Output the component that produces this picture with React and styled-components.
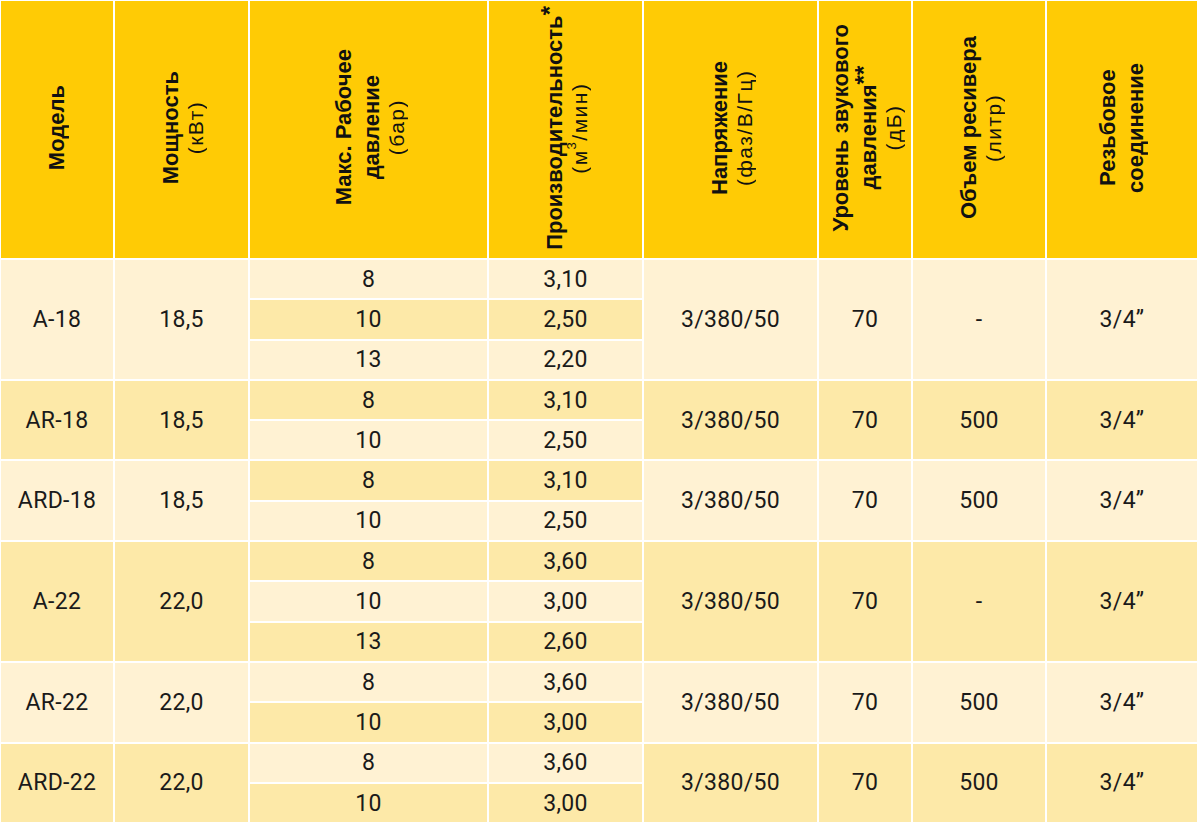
import React from 'react';
import styled, { createGlobalStyle } from 'styled-components';

const GlobalStyle = createGlobalStyle`
  html, body {
    margin: 0;
    padding: 0;
    background: #fff;
    overflow: hidden;
  }
`;

const COLORS = {
  header: '#ffcb05',
  light: '#fff2d3',
  dark: '#fde9a8',
};

const columns = [112, 133, 237, 153, 173, 92, 132, 150];

const headers = [
  { lines: ['Модель'] },
  { lines: ['Мощность'], unit: '(кВт)' },
  { lines: ['Макс. Рабочее', 'давление'], unit: '(бар)' },
  { lines: ['Производительность'], star: '*', unit: <>(м<sup>3</sup>/мин)</> },
  { lines: ['Напряжение'], unit: '(фаз/В/Гц)' },
  { lines: ['Уровень звукового', 'давления'], star: '**', unit: '(дБ)' },
  { lines: ['Объем ресивера'], unit: '(литр)' },
  { lines: ['Резьбовое', 'соединение'] },
];

const groups = [
  {
    model: 'A-18', power: '18,5', shade: 'light', receiver: '-',
    rows: [['8', '3,10', 'light'], ['10', '2,50', 'dark'], ['13', '2,20', 'light']],
  },
  {
    model: 'AR-18', power: '18,5', shade: 'dark', receiver: '500',
    rows: [['8', '3,10', 'dark'], ['10', '2,50', 'light']],
  },
  {
    model: 'ARD-18', power: '18,5', shade: 'light', receiver: '500',
    rows: [['8', '3,10', 'dark'], ['10', '2,50', 'light']],
  },
  {
    model: 'A-22', power: '22,0', shade: 'dark', receiver: '-',
    rows: [['8', '3,60', 'dark'], ['10', '3,00', 'light'], ['13', '2,60', 'dark']],
  },
  {
    model: 'AR-22', power: '22,0', shade: 'light', receiver: '500',
    rows: [['8', '3,60', 'light'], ['10', '3,00', 'dark']],
  },
  {
    model: 'ARD-22', power: '22,0', shade: 'dark', receiver: '500',
    rows: [['8', '3,60', 'light'], ['10', '3,00', 'dark']],
  },
];

const App = () => (
  <>
    <GlobalStyle />
    <Table>
      <colgroup>
        {columns.map((w, i) => (
          <col key={i} style={{ width: w }} />
        ))}
      </colgroup>
      <thead>
        <tr>
          {headers.map((h, i) => (
            <HeadCell key={i}>
              <Rotated>
                {h.lines.map((line, j) => (
                  <Title key={j}>
                    {line}
                    {j === h.lines.length - 1 && h.star && <Star>{h.star}</Star>}
                  </Title>
                ))}
                {h.unit && <Unit>{h.unit}</Unit>}
              </Rotated>
            </HeadCell>
          ))}
        </tr>
      </thead>
      <tbody>
        {groups.map((g) =>
          g.rows.map(([pressure, flow, shade], i) => (
            <Row key={g.model + i}>
              {i === 0 && (
                <>
                  <Cell shade={g.shade} rowSpan={g.rows.length}>{g.model}</Cell>
                  <Cell shade={g.shade} rowSpan={g.rows.length}>{g.power}</Cell>
                </>
              )}
              <Cell shade={shade}>{pressure}</Cell>
              <Cell shade={shade}>{flow}</Cell>
              {i === 0 && (
                <>
                  <Cell shade={g.shade} rowSpan={g.rows.length}>3/380/50</Cell>
                  <Cell shade={g.shade} rowSpan={g.rows.length}>70</Cell>
                  <Cell shade={g.shade} rowSpan={g.rows.length}>{g.receiver}</Cell>
                  <Cell shade={g.shade} rowSpan={g.rows.length}>3/4”</Cell>
                </>
              )}
            </Row>
          ))
        )}
      </tbody>
    </Table>
  </>
);

export default App;

const Table = styled.table`
  table-layout: fixed;
  width: 1200px;
  margin: -1px 0 0 -1px;
  border-collapse: separate;
  border-spacing: 2px;
  background: #fff;
  color: #111;
`;

const HeadCell = styled.th`
  height: 257px;
  padding: 0;
  background: ${COLORS.header};
  text-align: center;
  vertical-align: middle;
`;

const Rotated = styled.div`
  display: inline-block;
  writing-mode: vertical-rl;
  transform: rotate(180deg);
  text-align: center;
  white-space: nowrap;
`;

const Title = styled.div`
  font-family: "Liberation Sans", Arial, sans-serif;
  font-weight: 700;
  font-size: 22px;
  line-height: 28px;
`;

const Star = styled.span`
  font-size: 24px;
  line-height: 0;
  vertical-align: 0.2em;
`;

const Unit = styled.div`
  font-family: "Liberation Sans", Arial, sans-serif;
  font-weight: 400;
  font-size: 21px;
  line-height: 21px;
  letter-spacing: 1.5px;

  sup {
    font-size: 13px;
    line-height: 0;
  }
`;

const Row = styled.tr`
  height: 38.3px;
`;

const Cell = styled.td`
  padding: 0;
  background: ${(props) => COLORS[props.shade]};
  color: #1a1a1a;
  font-family: Roboto, "DejaVu Sans", sans-serif;
  font-weight: 400;
  font-size: 23px;
  letter-spacing: 0.3px;
  text-align: center;
  vertical-align: middle;
  white-space: nowrap;
`;
